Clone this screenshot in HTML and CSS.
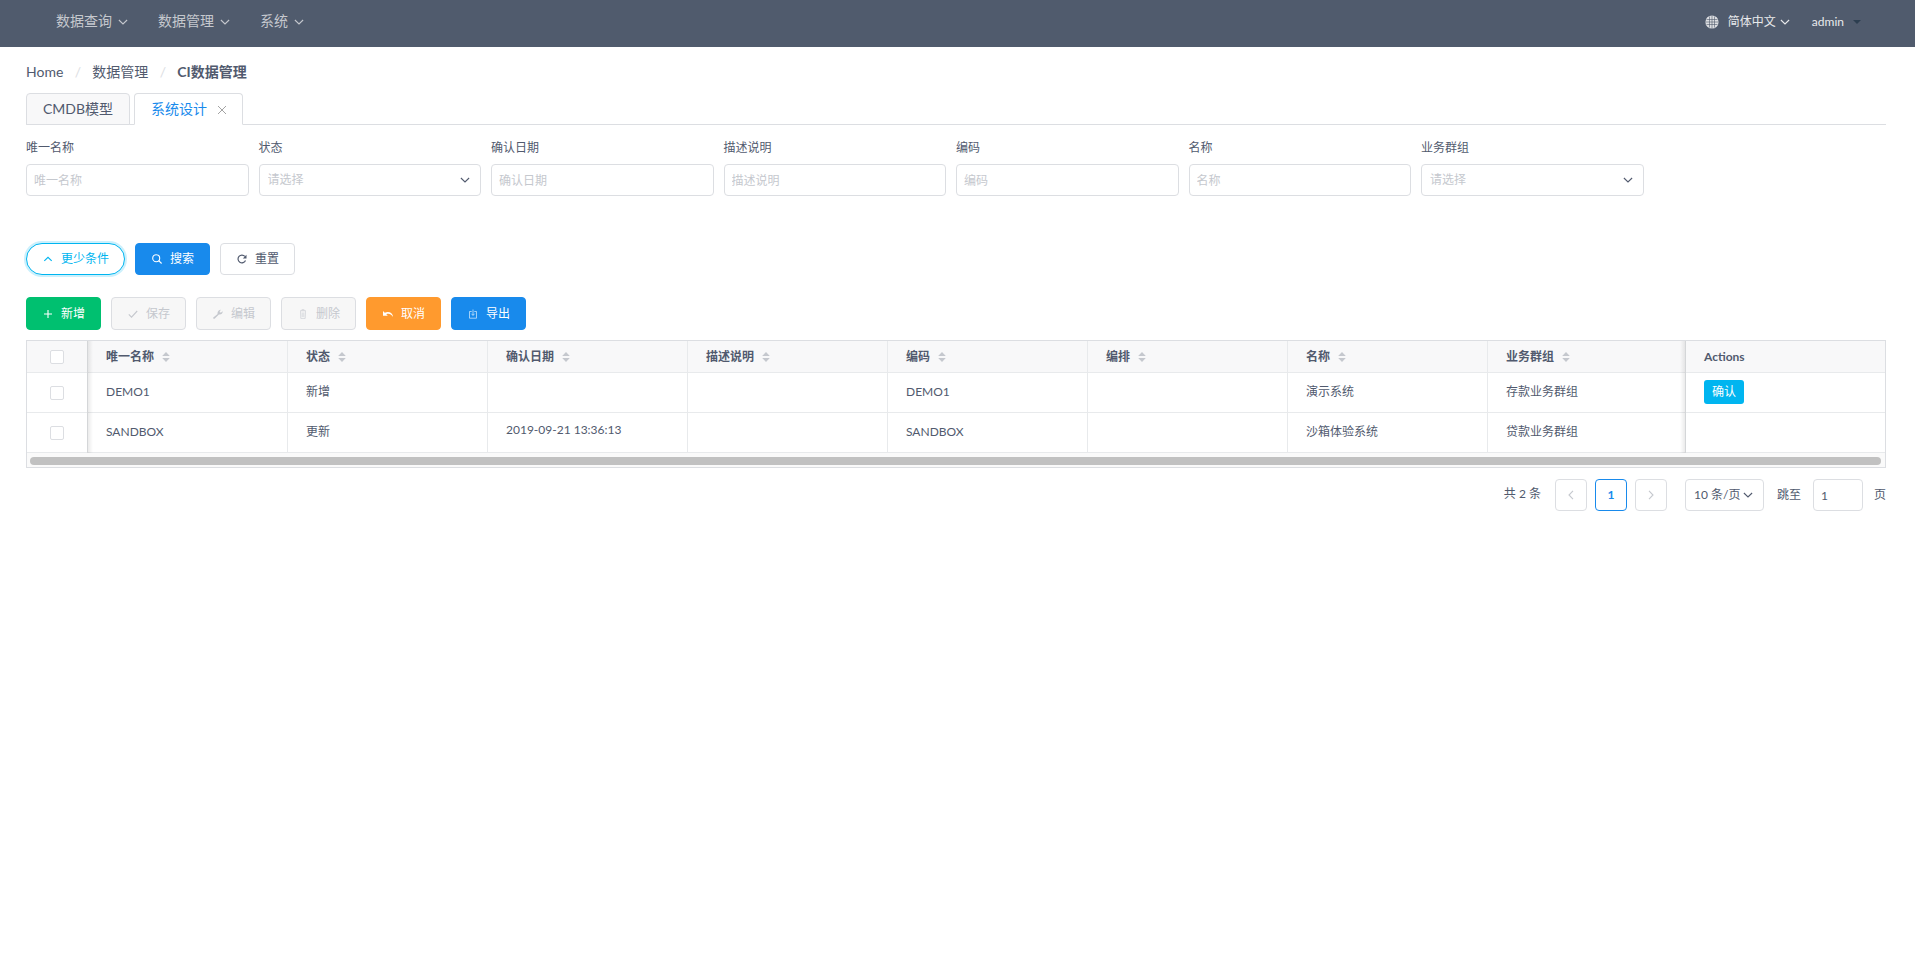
FILE: index.html
```html
<!DOCTYPE html>
<html lang="zh-CN">
<head>
<meta charset="utf-8">
<title>CI数据管理</title>
<link rel="stylesheet" href="styles.css">
</head>
<body>
<svg class="sprite" aria-hidden="true">
  <symbol id="down" viewBox="0 0 10 10"><path d="M.9 3 5 7 9.100 3"/></symbol>
  <symbol id="up" viewBox="0 0 10 10"><path d="M1.300 6.900 5 3.300 8.700 6.900"/></symbol>
  <symbol id="left" viewBox="0 0 10 10"><path d="M7 .8 3 5l4 4.200"/></symbol>
  <symbol id="right" viewBox="0 0 10 10"><path d="M3 .8 7 5 3 9.200"/></symbol>
  <symbol id="sort" viewBox="0 0 8 12"><path class="solid" d="M4 1 7.800 5H.2zM4 11 .2 7h7.600z"/></symbol>
</svg>
<header class="topbar">
  <nav class="menu">
    <button class="menu-item">数据查询<svg class="icon"><use href="#down"/></svg></button>
    <button class="menu-item">数据管理<svg class="icon"><use href="#down"/></svg></button>
    <button class="menu-item">系统<svg class="icon"><use href="#down"/></svg></button>
  </nav>
  <div class="account">
    <button class="lang"><svg class="globe" viewBox="0 0 14 14"><circle class="disc" cx="7" cy="7" r="6.600"/><path d="M4.500 1.500v11M7 .5v13M9.500 1.500v11M1.500 4.500h11M.5 7h13M1.500 9.500h11"/></svg>简体中文<svg class="icon"><use href="#down"/></svg></button>
    <button class="user">admin<span class="caret"></span></button>
  </div>
</header>
<main class="page">
  <nav class="crumbs">
    <a href="#">Home</a><span class="slash">/</span><a href="#">数据管理</a><span class="slash">/</span><strong>CI数据管理</strong>
  </nav>
  <div class="tabs" role="tablist">
    <button class="tab" role="tab">CMDB模型</button>
    <button class="tab active" role="tab">系统设计<svg class="close" viewBox="0 0 10 10"><path d="m1 1 8 8M9 1 1 9"/></svg></button>
  </div>
  <form class="filters">
    <div class="field"><label for="f1">唯一名称</label><input id="f1" placeholder="唯一名称"></div>
    <div class="field"><label for="f2">状态</label><div class="select"><select id="f2"><option>请选择</option></select><svg class="icon"><use href="#down"/></svg></div></div>
    <div class="field"><label for="f3">确认日期</label><input id="f3" placeholder="确认日期"></div>
    <div class="field"><label for="f4">描述说明</label><input id="f4" placeholder="描述说明"></div>
    <div class="field"><label for="f5">编码</label><input id="f5" placeholder="编码"></div>
    <div class="field"><label for="f6">名称</label><input id="f6" placeholder="名称"></div>
    <div class="field"><label for="f7">业务群组</label><div class="select"><select id="f7"><option>请选择</option></select><svg class="icon"><use href="#down"/></svg></div></div>
  </form>
  <div class="actions search-actions">
    <button class="btn round"><svg class="icon"><use href="#up"/></svg>更少条件</button>
    <button class="btn primary"><svg class="icon" viewBox="0 0 10 10"><circle cx="4.200" cy="4.200" r="3.500"/><path d="M6.700 6.700 9.600 9.500"/></svg>搜索</button>
    <button class="btn"><svg class="icon thick" viewBox="0 0 10 10"><path d="M8.500 6.500A3.900 3.900 0 1 1 7.900 2.400"/><path class="solid" d="M9.500.8v3.700H5.800z"/></svg>重置</button>
  </div>
  <div class="actions table-actions">
    <button class="btn success"><svg class="icon" viewBox="0 0 10 10"><path d="M5 1v8M1 5h8"/></svg>新增</button>
    <button class="btn" disabled><svg class="icon" viewBox="0 0 10 10"><path d="m.8 5.400 2.700 2.700L9.200 2"/></svg>保存</button>
    <button class="btn" disabled><svg class="icon" viewBox="0 0 10 10"><path class="solid" d="M.3 8.600 4.600 5C4 2.800 5.800.6 8 .7L6.700 2.300l.2 1.100 1.200.1L9.700 2.200c.2 2.300-1.700 3.800-3.800 3.300L1.600 9.700C.8 10.200-.3 9.400.3 8.600z"/></svg>编辑</button>
    <button class="btn" disabled><svg class="icon trash" viewBox="0 0 10 10"><path d="M2 1.800h6M3.900 1.800V.7h2.200v1.100M2.500 2.200 2.800 9.400h4.400l.3-7.200M4.200 3.500v4.500M5.800 3.500v4.500"/></svg>删除</button>
    <button class="btn warning"><svg class="icon" viewBox="0 0 10 10"><path class="solid" d="M0 2v4.800h4.800L3.300 5.200C5.500 4.200 8.200 5 9.500 7.500l.5-.2C9.300 3.500 5.300 2 1.800 3.800z"/></svg>取消</button>
    <button class="btn primary"><svg class="icon thin" viewBox="0 0 10 10"><path d="M3.700 2.500H1.500v6.700h7V2.500H6.300M5 .5v5.800M3.300 4.700 5 6.400l1.700-1.700"/></svg>导出</button>
  </div>
  <div class="grid">
    <table>
      <colgroup><col class="col-check"><col class="col-data" span="7"><col><col class="col-actions"></colgroup>
      <thead>
        <tr>
          <th class="check"><input type="checkbox" aria-label="全选"></th>
          <th>唯一名称<svg class="sort"><use href="#sort"/></svg></th>
          <th>状态<svg class="sort"><use href="#sort"/></svg></th>
          <th>确认日期<svg class="sort"><use href="#sort"/></svg></th>
          <th>描述说明<svg class="sort"><use href="#sort"/></svg></th>
          <th>编码<svg class="sort"><use href="#sort"/></svg></th>
          <th>编排<svg class="sort"><use href="#sort"/></svg></th>
          <th>名称<svg class="sort"><use href="#sort"/></svg></th>
          <th>业务群组<svg class="sort"><use href="#sort"/></svg></th>
          <th class="fixed">Actions</th>
        </tr>
      </thead>
      <tbody>
        <tr>
          <td class="check"><input type="checkbox" aria-label="DEMO1"></td>
          <td>DEMO1</td><td>新增</td><td></td><td></td><td>DEMO1</td><td></td><td>演示系统</td><td>存款业务群组</td>
          <td class="fixed"><button class="confirm">确认</button></td>
        </tr>
        <tr>
          <td class="check"><input type="checkbox" aria-label="SANDBOX"></td>
          <td>SANDBOX</td><td>更新</td><td class="date">2019-09-21 13:36:13</td><td></td><td>SANDBOX</td><td></td><td>沙箱体验系统</td><td>贷款业务群组</td>
          <td class="fixed"></td>
        </tr>
      </tbody>
    </table>
    <div class="scroll"><div class="thumb"></div></div>
  </div>
  <div class="pager">
    <span class="total">共 2 条</span>
    <button class="page-btn" aria-label="上一页"><svg class="icon"><use href="#left"/></svg></button>
    <button class="page-btn current">1</button>
    <button class="page-btn" aria-label="下一页"><svg class="icon"><use href="#right"/></svg></button>
    <div class="select size"><select aria-label="每页条数"><option>10 条/页</option></select><svg class="icon"><use href="#down"/></svg></div>
    <label for="jump">跳至</label>
    <input id="jump" value="1">
    <span>页</span>
  </div>
</main>
</body>
</html>
```
FILE: styles.css
```css
* { box-sizing: border-box; }
body {
  margin: 0;
  background: #fff;
  color: #515a6e;
  font: 12px/18px Lato, "Noto Sans CJK SC", sans-serif;
}
button, input, select { font: inherit; color: inherit; margin: 0; }
button { cursor: pointer; }
a { color: inherit; text-decoration: none; }
svg { fill: none; stroke: currentColor; flex: none; }
.sprite { display: none; }
.solid { fill: currentColor; stroke: none; }
.icon { width: 10px; height: 10px; stroke-width: 1.1; }
.thick { stroke-width: 1.2; }
.thin { stroke-width: .6; }
.trash { stroke-width: .6; }

.topbar {
  display: flex;
  justify-content: space-between;
  height: 47px;
  padding: 0 54px 6px 56px;
  background: #505b6d;
}
.topbar button {
  display: flex;
  align-items: center;
  padding: 0;
  border: 0;
  background: none;
}
.menu, .account { display: flex; }
.menu { gap: 30px; }
.menu .menu-item { gap: 6px; font-size: 14px; color: #c5c8ce; }
.menu .icon { margin-top: 3px; }
.account { gap: 22px; padding-top: 2px; color: #e8eaec; }
.lang .icon { margin-left: 4px; }
.globe { width: 14px; height: 14px; margin-right: 9px; stroke: #505b6d; stroke-width: .6; }
.disc { fill: #dcdee2; stroke: none; }
.caret { margin-left: 9px; border: 4px solid transparent; border-top-color: #2c3e50; border-bottom: 0; }

.page { padding: 14px 29px 20px 26px; }
.crumbs { display: flex; font-size: 14px; line-height: 22px; }
.slash { width: 29px; text-align: center; color: #dcdee2; }
.tabs {
  display: flex;
  gap: 4px;
  height: 32px;
  margin-top: 10px;
  border-bottom: 1px solid #dcdee2;
}
.tab {
  display: flex;
  align-items: center;
  height: 32px;
  padding: 0 16px;
  border: 1px solid #dcdee2;
  border-radius: 4px 4px 0 0;
  background: #f8f8f9;
  font-size: 14px;
}
.tab.active { background: #fff; border-bottom-color: #fff; color: #188aec; }
.close { width: 10px; height: 10px; margin-left: 10px; margin-top: 2px; color: #999; stroke-width: .9; }
.tab.active { padding-right: 15px; }

.filters { display: grid; grid-template-columns: repeat(8, 1fr); padding-top: 14px; }
.field { padding-right: 10px; }
.field label { display: block; margin-bottom: 7px; }
input, select {
  display: block;
  width: 100%;
  height: 32px;
  padding: 0 7px;
  border: 1px solid #dcdee2;
  border-radius: 4px;
  background: #fff;
  outline: 0;
}
input::placeholder { color: #c5c8ce; }
.select { position: relative; }
.select select { appearance: none; padding-left: 8px; color: #c5c8ce; }
.select .icon { position: absolute; right: 11px; top: 11px; pointer-events: none; }

.actions { display: flex; gap: 10px; margin-top: 22px; }
.search-actions { margin-top: 47px; }
.btn {
  display: flex;
  align-items: center;
  gap: 8px;
  height: 32px;
  padding: 0 16px;
  border: 1px solid #dcdee2;
  border-radius: 4px;
  background: #fff;
}
.table-actions .btn { height: 33px; }
.btn:disabled { background: #f7f7f7; color: #c5c8ce; }
.round { border-color: #00b5f0; border-radius: 16px; color: #00b5f0; box-shadow: 0 0 0 2px #ccf0fc; }
.primary { border-color: #188aec; background: #188aec; color: #fff; }
.success { border-color: #00c070; background: #00c070; color: #fff; }
.warning { border-color: #ff9a2e; background: #ff9a2e; color: #fff; }
.btn { padding: 0 15px 0 16px; }

.grid { margin-top: 10px; border: 1px solid #dcdee2; }
table { width: 100%; table-layout: fixed; border-collapse: separate; border-spacing: 0; }
.col-check { width: 61px; }
.col-data { width: 200px; }
.col-actions { width: 199px; }
th, td {
  height: 40px;
  padding: 0 18px;
  border: solid #e8eaec;
  border-width: 0 1px 1px 0;
  text-align: left;
}
th { height: 32px; background: #f8f8f9; }
td { padding-bottom: 2px; background: #fff; }
.check { position: relative; padding: 0 1px 0 0; }
.fixed { position: relative; border-right: 0; }
.check::after, .fixed::before {
  content: "";
  position: absolute;
  top: 0;
  bottom: -1px;
  width: 6px;
}
.check::after { left: 100%; background: linear-gradient(to right, #00000018, #0000); }
.fixed::before { right: 100%; background: linear-gradient(to left, #00000018, #0000); }
.check input {
  appearance: none;
  width: 14px;
  height: 14px;
  margin: 0 auto;
  padding: 0;
  border-radius: 2px;
}
.sort { width: 8px; height: 12px; margin-left: 8px; color: #c5c8ce; vertical-align: -2px; }
.date { padding-bottom: 5px; }
.confirm {
  height: 24px;
  padding: 0 8px;
  border: 0;
  border-radius: 3px;
  background: #00b5f0;
  color: #fff;
}
.scroll { padding: 4px 4px 2px 3px; background: #fafafa; }
.thumb { height: 8px; border-radius: 4px; background: #c1c1c1; }

.pager { display: flex; justify-content: flex-end; align-items: center; margin-top: 11px; }
.total { margin-right: 14px; padding-bottom: 2px; }
.page-btn {
  display: grid;
  place-items: center;
  width: 32px;
  height: 32px;
  margin-right: 8px;
  padding: 0;
  border: 1px solid #dcdee2;
  border-radius: 4px;
  background: #fff;
  color: #c5c8ce;
}
.current { border-color: #188aec; color: #188aec; font-weight: 700; }
.pager .size { width: 79px; margin: 0 13px 0 10px; }
.pager .size select { color: #515a6e; }
.pager #jump { width: 50px; margin: 0 11px 0 12px; }
```
